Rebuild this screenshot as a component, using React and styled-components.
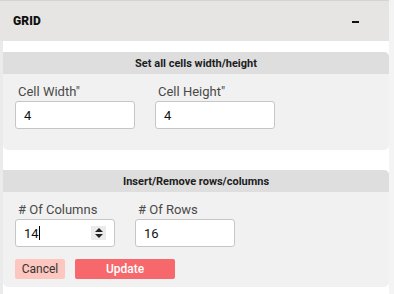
import React from "react";
import styled, { createGlobalStyle } from "styled-components";

const Global = createGlobalStyle`
  html, body { margin: 0; padding: 0; background: #f4f4f4; }
  body { font-family: Roboto, "Liberation Sans", Arial, sans-serif; }
  * { box-sizing: border-box; }
`;

const Panel = styled.div`
  width: 389px;
  height: 294px;
  background: #ebebeb;
  display: flex;
  flex-direction: column;
  overflow: hidden;
`;

const Header = styled.div`
  height: 41px;
  flex: none;
  border-top: 1px solid #d4d4d4;
  background: #e6e5e3;
  display: flex;
  align-items: center;
  justify-content: space-between;
  padding: 0 30px 0 13px;
`;

const Title = styled.div`
  font-size: 12px;
  font-weight: 900;
  color: #111;
  letter-spacing: 0.1px;
`;

const Collapse = styled.span`
  display: block;
  width: 7px;
  height: 2px;
  background: #111;
  margin-top: 2px;
`;

const Body = styled.div`
  flex: 1;
  margin-left: 3px;
  background: #fff;
  padding-top: 11px;
  display: flex;
  flex-direction: column;
  gap: 20px;
`;

const Card = styled.section`
  background: #f1f1f1;
  border-radius: 0 5px 5px 5px;
  overflow: hidden;
  padding-bottom: ${(p) => p.$pb}px;
`;

const CardHead = styled.div`
  height: 22px;
  background: #dedede;
  display: flex;
  align-items: center;
  justify-content: center;
  font-size: 11px;
  font-weight: 700;
  color: #1d1d1d;
`;

const Fields = styled.div`
  display: flex;
  gap: 20px;
  padding: 10px 0 0 12px;
`;

const Field = styled.label`
  display: flex;
  flex-direction: column;
  gap: 2px;
  width: ${(p) => p.$w}px;
`;

const Label = styled.span`
  font-size: 13px;
  line-height: 15px;
  color: #4a4a4a;
  padding-left: 3px;
`;

const Input = styled.input`
  width: 100%;
  height: 28px;
  border: 1px solid #c6c6c6;
  border-radius: 3px;
  background: #fff;
  padding: 0 8px;
  font-family: Roboto, "Liberation Sans", Arial, sans-serif;
  font-size: 13px;
  color: #111;
  outline: none;
`;

const FakeInput = styled.div`
  width: 100%;
  height: 28px;
  border: 1px solid #c6c6c6;
  border-radius: 3px;
  background: #fff;
  padding: 0 8px 0 8px;
  display: flex;
  align-items: center;
  font-size: 13px;
  color: #111;
`;

const Value = styled.span`
  line-height: 15px;
`;

const Caret = styled.span`
  width: 1px;
  height: 14px;
  background: #000;
`;

const Spacer = styled.span`
  flex: 1;
`;

const Spinner = styled.span`
  width: 15px;
  height: 14px;
  background: #ebebeb;
  display: flex;
  flex-direction: column;
  align-items: center;
  justify-content: center;
  gap: 2px;
`;

const Tri = styled.span`
  width: 0;
  height: 0;
  border-left: 4px solid transparent;
  border-right: 4px solid transparent;
  ${(p) =>
    p.$up
      ? "border-bottom: 4px solid #222;"
      : "border-top: 4px solid #222;"}
`;

const Actions = styled.div`
  display: flex;
  gap: 10px;
  padding: 12px 0 0 12px;
`;

const Button = styled.button`
  width: ${(p) => p.$w}px;
  height: 20px;
  border: none;
  border-radius: 2px;
  padding: 0;
  font-family: Roboto, "Liberation Sans", Arial, sans-serif;
  font-size: 12px;
  font-weight: ${(p) => (p.$primary ? 500 : 400)};
  background: ${(p) => (p.$primary ? "#f6686c" : "#fdc6bf")};
  color: ${(p) => (p.$primary ? "#fff" : "#333")};
`;

export default function App() {
  return (
    <>
      <Global />
      <Panel>
        <Header>
          <Title>GRID</Title>
          <Collapse />
        </Header>
        <Body>
          <Card $pb={21}>
            <CardHead>Set all cells width/height</CardHead>
            <Fields>
              <Field $w={120}>
                <Label>Cell Width"</Label>
                <Input defaultValue="4" />
              </Field>
              <Field $w={120}>
                <Label>Cell Height"</Label>
                <Input defaultValue="4" />
              </Field>
            </Fields>
          </Card>
          <Card $pb={8}>
            <CardHead>Insert/Remove rows/columns</CardHead>
            <Fields>
              <Field $w={100}>
                <Label># Of Columns</Label>
                <FakeInput>
                  <Value>14</Value>
                  <Caret />
                  <Spacer />
                  <Spinner>
                    <Tri $up />
                    <Tri />
                  </Spinner>
                </FakeInput>
              </Field>
              <Field $w={100}>
                <Label># Of Rows</Label>
                <Input defaultValue="16" />
              </Field>
            </Fields>
            <Actions>
              <Button $w={50}>Cancel</Button>
              <Button $w={100} $primary>
                Update
              </Button>
            </Actions>
          </Card>
        </Body>
      </Panel>
    </>
  );
}
